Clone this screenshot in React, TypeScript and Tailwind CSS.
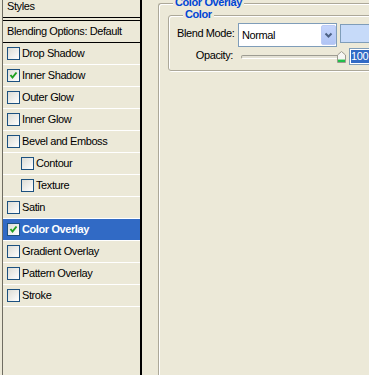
import React from "react";

interface Item {
  label: string;
  checked?: boolean;
  indent?: boolean;
  selected?: boolean;
}

const items: Item[] = [
  { label: "Drop Shadow" },
  { label: "Inner Shadow", checked: true },
  { label: "Outer Glow" },
  { label: "Inner Glow" },
  { label: "Bevel and Emboss" },
  { label: "Contour", indent: true },
  { label: "Texture", indent: true },
  { label: "Satin" },
  { label: "Color Overlay", checked: true, selected: true },
  { label: "Gradient Overlay" },
  { label: "Pattern Overlay" },
  { label: "Stroke" },
];

function Checkbox({ checked }: { checked?: boolean }) {
  return (
    <span className="w-[13px] h-[13px] shrink-0 border border-[#1c5180] bg-linear-to-br from-[#dcdcd5] to-white flex items-center justify-center">
      {checked && (
        <svg width="11" height="11" viewBox="0 0 11 11">
          <path d="M2.5 5 L4.5 7.5 L8.5 2.5" fill="none" stroke="#21a121" strokeWidth="2" />
        </svg>
      )}
    </span>
  );
}

function Thumb() {
  return (
    <svg width="9" height="12" viewBox="0 0 9 12" className="shrink-0 -ml-[4px]">
      <path d="M0.5 4 L4.5 0.5 L8.5 4 L8.5 11.5 L0.5 11.5 Z" fill="#f6f6f3" stroke="#9c9a8e" />
      <rect x="1" y="9" width="7" height="2" fill="#21c04a" />
      <rect x="1" y="8" width="7" height="1" fill="#9de0a8" />
    </svg>
  );
}

export default function App() {
  return (
    <div className="w-[369px] h-[375px] overflow-hidden bg-[#ece9d8] flex font-['Liberation_Sans',Arial,sans-serif] text-[11px] tracking-[-0.4px] text-black">
      {/* styles list */}
      <div className="ml-[2px] w-[140px] shrink-0 h-full border-l border-l-[#6f6d62] border-r-2 border-r-black flex flex-col">
        <div className="h-[18px] border-b border-black pl-[4px] leading-[12px]">Styles</div>
        <div className="h-[2px]" />
        <div className="h-[23px] border-y border-black flex items-center pl-[4px] leading-[13px]">
          Blending Options: Default
        </div>
        {items.map((item) => (
          <div
            key={item.label}
            className={
              "h-[22px] border-b border-white flex items-center gap-[2px] leading-[13px] " +
              (item.indent ? "pl-[18px] " : "pl-[4px] ") +
              (item.selected ? "bg-[#316ac5] text-white font-bold" : "")
            }
          >
            <Checkbox checked={item.checked} />
            <span>{item.label}</span>
          </div>
        ))}
      </div>

      {/* options */}
      <div className="flex-1 min-w-0 pl-[16px] pt-[3px]">
        <div className="w-[260px] h-[400px] border-l border-t border-[#aca899] rounded-tl-[3px] shadow-[inset_1px_1px_0_#fff] pl-[9px]">
          <div className="-mt-[8px] ml-[5px] px-[2px] w-fit bg-[#ece9d8] leading-[13px] font-bold text-[#0046d5]">
            Color Overlay
          </div>
          <div className="mt-[6px] w-[260px] border border-[#aca899] rounded-[3px] shadow-[1px_1px_0_#fff,inset_1px_1px_0_#fff] pl-[8px] pb-[5px]">
            <div className="-mt-[8px] ml-[6px] px-[2px] w-fit bg-[#ece9d8] leading-[13px] font-bold text-[#0046d5]">
              Color
            </div>
            <div className="mt-[2px] flex items-start">
              <span className="w-[56px] mt-[4px] text-right whitespace-nowrap leading-[13px]">Blend Mode:</span>
              <div className="ml-[5px] w-[99px] h-[24px] border border-[#7f9db9] bg-white flex">
                <span className="flex-1 pl-[3px] pt-[5px] leading-[13px]">Normal</span>
                <span className="w-[15px] my-[1px] rounded-[2px] bg-linear-to-b from-[#c5d5fc] to-[#b0c4f4] border border-[#bccbf5] flex items-center justify-center">
                  <svg width="9" height="7" viewBox="0 0 9 7">
                    <path d="M1.5 1.5 L4.5 4.5 L7.5 1.5" fill="none" stroke="#4d6185" strokeWidth="2" />
                  </svg>
                </span>
              </div>
              <div className="ml-[3px] mt-[1px] w-[40px] h-[19px] border border-[#7f9db9] bg-[#c6daf9]" />
            </div>
            <div className="mt-[1px] flex items-start">
              <span className="w-[56px] mt-[1px] text-right whitespace-nowrap leading-[13px]">Opacity:</span>
              <div className="ml-[8px] w-[105px] h-[17px] flex items-center">
                <span className="flex-1 h-[4px] rounded-full border border-[#9d9c92] border-b-white bg-[#e4e2d6] mt-[1px]" />
                <Thumb />
              </div>
              <div className="ml-[3px] w-[40px] h-[17px] border border-[#7f9db9] bg-white flex items-center">
                <span className="ml-[1px] bg-[#316ac5] text-white leading-[13px] pr-[4px]">100</span>
              </div>
            </div>
          </div>
        </div>
      </div>
    </div>
  );
}
